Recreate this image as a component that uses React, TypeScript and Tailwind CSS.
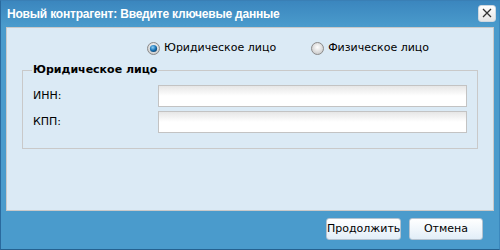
import React from "react";

function Radio({ checked }: { checked: boolean }) {
  return (
    <svg width="13" height="13" viewBox="0 0 13 13">
      <defs>
        <radialGradient id="rg" cx="50%" cy="40%" r="60%">
          <stop offset="0%" stopColor="#ffffff" />
          <stop offset="100%" stopColor="#c9c9c9" />
        </radialGradient>
        <radialGradient id="dot" cx="40%" cy="35%" r="70%">
          <stop offset="0%" stopColor="#8fd0f5" />
          <stop offset="60%" stopColor="#1a73b5" />
          <stop offset="100%" stopColor="#0b3f6b" />
        </radialGradient>
      </defs>
      <circle cx="6.5" cy="6.5" r="6" fill="url(#rg)" stroke="#8a8a8a" strokeWidth="1" />
      {checked && <circle cx="6.5" cy="6.5" r="3.6" fill="url(#dot)" />}
    </svg>
  );
}

export default function App() {
  const font = { fontFamily: '"DejaVu Sans", Tahoma, sans-serif' } as React.CSSProperties;
  return (
    <div
      className="w-[500px] h-[250px] flex flex-col bg-[#4a9bcc] border-l border-b border-t border-r border-l-[#2a6a9e] border-b-[#25618f] border-t-[#3a7fb5] border-r-[#3b88bd] text-[11px] text-black"
      style={font}
    >
      <div className="h-[25px] flex items-center justify-between pl-[6px] pr-[3px] bg-gradient-to-b from-[#3b86be] to-[#4a9bcc]">
        <span
          className="text-white font-bold text-[12px] tracking-[-0.2px]"
          style={{ fontFamily: '"Liberation Sans", Arial, sans-serif' }}
        >
          Новый контрагент: Введите ключевые данные
        </span>
        <div className="w-[18px] h-[17px] rounded-[3px] bg-gradient-to-b from-white to-[#e6e6e6] border border-[#cfd8e0] flex items-center justify-center mt-[-1px]">
          <svg width="10" height="10" viewBox="0 0 10 10">
            <path d="M1 1 L9 9 M9 1 L1 9" stroke="#333" strokeWidth="1.3" />
          </svg>
        </div>
      </div>
      <div className="mx-[5px] mt-[1px] h-[184px] bg-[#dbeaf5] border border-[#c9c9c9] flex flex-col">
        <div className="flex items-center h-[40px] pl-[140px]">
          <label className="flex items-center gap-[4px]">
            <Radio checked />
            <span>Юридическое лицо</span>
          </label>
          <label className="flex items-center gap-[4px] ml-[35px]">
            <Radio checked={false} />
            <span>Физическое лицо</span>
          </label>
        </div>
        <div className="relative mx-[15px] mt-[2px] h-[79px] border border-[#c9c9c9] px-[10px] pt-[14px]">
          <div className="absolute left-[9px] top-[-8px] bg-[#dbeaf5] px-[1px] font-bold leading-[14px]">
            Юридическое лицо
          </div>
          <div className="flex items-center h-[22px]">
            <span className="w-[125px]">ИНН:</span>
            <div className="w-[309px] h-[22px] border border-[#c3c3c3] bg-gradient-to-b from-[#e6e6e6] via-white to-white" />
          </div>
          <div className="flex items-center h-[22px] mt-[4px]">
            <span className="w-[125px]">КПП:</span>
            <div className="w-[309px] h-[22px] border border-[#c3c3c3] bg-gradient-to-b from-[#e6e6e6] via-white to-white" />
          </div>
        </div>
      </div>
      <div className="flex justify-end gap-[8px] pr-[16px] mt-[7px]">
        <button className="w-[75px] h-[22px] rounded-[3px] border border-[#b5c3d0] bg-gradient-to-b from-white to-[#e2eef8] text-[11px]">
          Продолжить
        </button>
        <button className="w-[74px] h-[22px] rounded-[3px] border border-[#b5c3d0] bg-gradient-to-b from-white to-[#e2eef8] text-[11px]">
          Отмена
        </button>
      </div>
    </div>
  );
}
